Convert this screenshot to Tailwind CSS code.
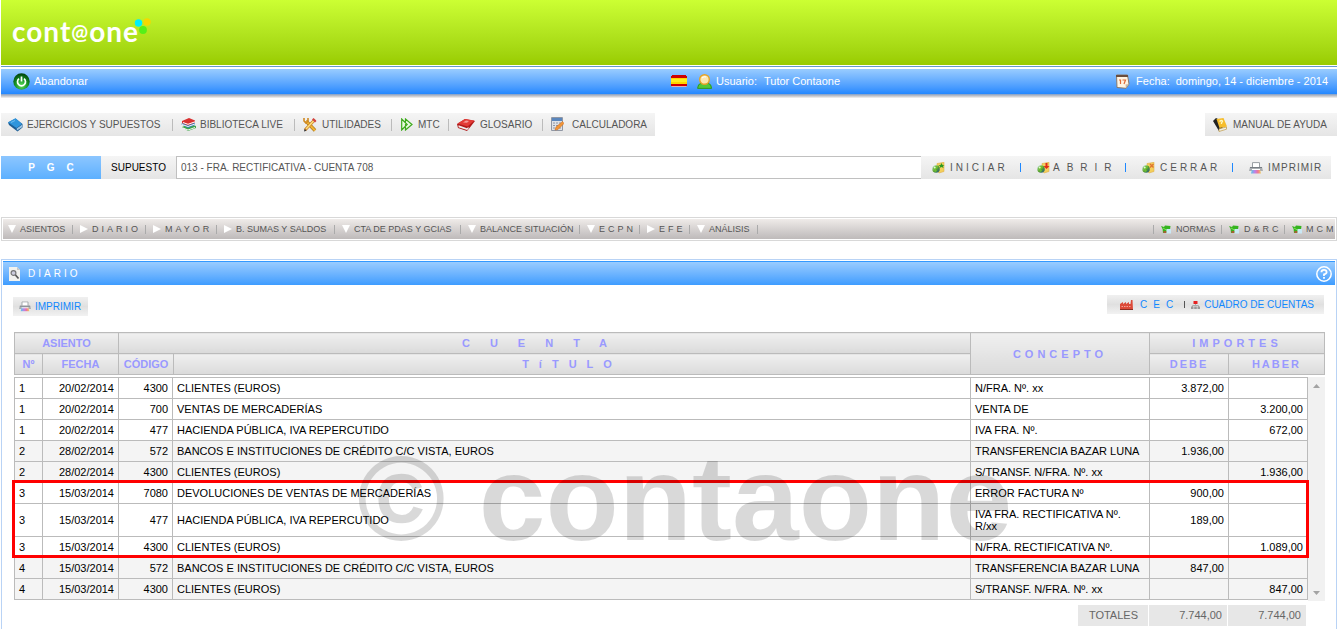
<!DOCTYPE html>
<html lang="es">
<head>
<meta charset="utf-8">
<meta name="viewport" content="width=device-width, initial-scale=1">
<title>Contaone - Diario</title>
<script src="https://cdn.jsdelivr.net/npm/@tailwindcss/browser@4"></script>
</head>
<body class="flex min-h-screen flex-col overflow-x-hidden bg-white pl-px font-['Liberation_Sans',Arial,sans-serif] text-[11px] leading-3 text-black">

<svg class="absolute size-0" aria-hidden="true">
  <defs>
    <linearGradient id="g-globe" x1="0" y1="0" x2="1" y2="1"><stop offset="0" stop-color="#d8f0ff"/><stop offset=".5" stop-color="#5aa02c"/><stop offset="1" stop-color="#1c4f8c"/></linearGradient>
    <linearGradient id="g-print" x1="0" x2="1"><stop offset="0" stop-color="#58c8e8"/><stop offset=".4" stop-color="#c080e8"/><stop offset=".7" stop-color="#f07890"/><stop offset="1" stop-color="#f0d060"/></linearGradient>
    <radialGradient id="g-power" cx=".5" cy=".75" r=".7"><stop offset="0" stop-color="#5be05b"/><stop offset=".6" stop-color="#128a22"/><stop offset="1" stop-color="#04490d"/></radialGradient>
  </defs>
  <symbol id="folder-globe" viewBox="0 0 13 12">
    <path d="M5 1.5 8 1l4-.8v9.3L7 11 5 9z" fill="#f4cf5c" stroke="#d9a53a" stroke-width=".5"/>
    <circle cx="4" cy="7" r="3.8" fill="url(#g-globe)"/>
    <path d="M1 6q2-3 4-2l1 2-2 1 1 2-2 1z" fill="#6cc02e"/>
    <circle cx="2.7" cy="5.4" r="1" fill="#fff" opacity=".8"/>
  </symbol>
  <symbol id="printer" viewBox="0 0 14 12">
    <path d="M3.5 5V.6h7V5" fill="#fff" stroke="#999ea3"/>
    <path d="M1 5h12l1 4H0z" fill="#a9adb1"/><path d="M1 5h12v1H1z" fill="#777d83"/>
    <path d="M3 7.5h8L12 11.5H2z" fill="url(#g-print)"/><path d="M3 7.5h8" stroke="#fff"/>
  </symbol>
  <symbol id="note" viewBox="0 0 10 9">
    <path d="M0 1 3 2 4 .6 9.500 1 8.600 7.500 2 8 1.600 4z" fill="#35b41f"/>
    <path d="M2 3l5 3" stroke="#7ae055"/><path d="M2.500 6h3v2h-3z" fill="#a5602f"/>
    <rect x="5.500" y="4" width="4.500" height="4.500" fill="#c9e8f5"/>
  </symbol>
  <symbol id="down" viewBox="0 0 8 8"><path d="M0 0h8L4 8z" fill="#fff"/></symbol>
  <symbol id="right" viewBox="0 0 8 8"><path d="M0 0 8 4 0 8z" fill="#fff"/></symbol>
</svg>

<header>
  <div class="flex h-[65px] items-start bg-linear-to-b from-[#ccff33] to-[#99cc00]">
    <a href="#" aria-label="cont@one" class="relative mt-[15px] ml-[11px] flex items-start font-[Lato,sans-serif] text-[28px] leading-8 font-bold tracking-[1px] text-white">cont<span class="text-[20px]">@</span>one
      <svg class="absolute -right-3 top-[3px] h-4 w-[17px]" viewBox="0 0 17 16" aria-hidden="true"><circle cx="4.500" cy="5" r="3.700" fill="#00f0f8"/><circle cx="13" cy="4" r="3.700" fill="#f5d800"/><circle cx="9" cy="12" r="3.900" fill="#55f018"/></svg>
    </a>
  </div>
  <div class="mt-px h-px bg-[#6699cc]"></div>
  <div class="mt-0.5 flex h-[25px] items-center bg-linear-to-b from-[#99ccff] to-[#2288ff] pb-px text-white">
    <div class="flex w-1/2 items-center pl-3">
      <a href="#" class="flex items-center gap-1">
        <svg class="size-[17px]" viewBox="0 0 17 17" aria-hidden="true"><circle cx="8.500" cy="8.500" r="8.200" fill="url(#g-power)"/><path d="M6 5.700a4 4 0 1 0 5 0M8.500 3.500v5" fill="none" stroke="#fff" stroke-width="1.700"/></svg>
        Abandonar</a>
    </div>
    <div class="flex flex-1 items-center justify-between pr-[9px] pl-[2px]">
      <div class="flex items-center">
        <button type="button" aria-label="Español" class="mr-[10px]"><svg class="h-3 w-4" viewBox="0 0 16 12" aria-hidden="true"><path d="M1 0h14v12H1z" fill="#cf0000"/><path d="M0 1h16v10H0z" fill="#cf0000"/><path d="M0 3h16v6H0z" fill="#ffd500"/><path d="M0 4h16v3H0z" fill="#ffed21"/><path d="M.5 11.500h15" stroke="#e8b0b0"/></svg></button>
        <svg class="mr-1 h-[15px] w-[15px]" viewBox="0 0 15 15" aria-hidden="true"><path d="M.6 14.400q0-4.500 4-5.400h6q4 1 4 5.400z" fill="#54c738" stroke="#2d9a22"/><circle cx="7.500" cy="5.500" r="4.800" fill="#fbe6b0" stroke="#e6a324" stroke-width="1.400"/><path d="M5 4q2-2 4-1" stroke="#fff" fill="none"/></svg>
        <span class="mr-[7px]">Usuario:</span><span>Tutor Contaone</span>
      </div>
      <div class="flex items-center">
        <svg class="mr-1.5 h-[15px] w-[15px]" viewBox="0 0 15 15" aria-hidden="true"><path d="M1.500 1h11l1.500 9-3 4.300-9-.8z" fill="#fff4e2" stroke="#8b7868"/><path d="M1 1h12v2H1z" fill="#6a4d3d"/><path d="M4 6h1.500v4M7.500 6h3L9 10" fill="none" stroke="#e06a36" stroke-width="1.200"/><path d="m14 10-3.500.4.500 3.900z" fill="#c4b7a6"/></svg>
        <span class="mr-1.5">Fecha:</span><span>domingo, 14 - diciembre - 2014</span>
      </div>
    </div>
  </div>
  <div class="h-1 bg-linear-to-b from-[#7d9cc8] via-[#c4c4c8] to-[#f4f4f4]"></div>
</header>

<nav aria-label="Principal" class="mt-[15px] flex justify-between text-[10px] text-[#555]">
  <ul class="flex h-[23px] bg-linear-to-b from-[#f5f5f5] to-[#e5e5e5] whitespace-nowrap">
    <li class="flex w-[172px] items-center justify-between pl-[7px]"><a href="#" class="flex items-center gap-1"><svg class="h-[14px] w-[15px]" viewBox="0 0 15 14" aria-hidden="true"><path d="M0 4.500 7.500.5 14.500 6v3.500L9.500 13.500 1 7z" fill="#1c5d94"/><path d="M0 4.200 7.500.3 14 6 8.500 10z" fill="#2f95dc"/><path d="M8.700 10.500 14 6.800v2.400L9 12.600z" fill="#9cc4e4"/><path d="m3 4.500 4-2" stroke="#6fbdf0"/></svg>EJERCICIOS Y SUPUESTOS</a><span class="h-3 w-px bg-[#bbb]"></span></li>
    <li class="flex w-[122px] items-center justify-between pl-2"><a href="#" class="flex items-center gap-1"><svg class="h-[14px] w-[15px]" viewBox="0 0 15 14" aria-hidden="true"><path d="m1 9 6 4 8-3v-2L8 6z" fill="#3fa548"/><path d="m2 10 5 2 7-2.500" stroke="#f4f4f4" fill="none"/><path d="m0 6 7 4 7-3V5L7 3z" fill="#2f7cc0"/><path d="m1 6.500 6 2 7-2.500" stroke="#f4f4f4" fill="none"/><path d="M1 3 8 0l6 2.500v2L7 7.500 1 5z" fill="#d93030"/><path d="m2 4.500 5 1.800 7-2.500" stroke="#fff" fill="none"/></svg>BIBLIOTECA LIVE</a><span class="h-3 w-px bg-[#bbb]"></span></li>
    <li class="flex w-[97px] items-center justify-between pl-2"><a href="#" class="flex items-center gap-[5px]"><svg class="size-[14px]" viewBox="0 0 14 14" aria-hidden="true"><path d="M3 3 12 12.500" stroke="#a97720" stroke-width="3.400"/><path d="M3 3 12 12.500" stroke="#f3b532" stroke-width="2"/><path d="M1 0v3l2 2 2-2V0" fill="none" stroke="#d08a24" stroke-width="1.600"/><path d="M12 1.500 2 12" stroke="#c77c26" stroke-width="3"/><path d="M11 2.500 3 11" stroke="#ffe07a" stroke-width="1.600"/><path d="m10.500 0 3 3-1.500 1.500-3-3z" fill="#d44343"/><path d="M1 13.500 1.500 11l2 1.800z" fill="#333"/></svg>UTILIDADES</a><span class="h-3 w-px bg-[#bbb]"></span></li>
    <li class="flex w-[57px] items-center justify-between pl-[9px]"><a href="#" class="flex items-center gap-[5px]"><svg class="h-[13px] w-3" viewBox="0 0 12 13" aria-hidden="true"><path d="M.7 1v11l5.500-5.500zM4.500 1v11l6.500-5.500z" fill="#e9fbe0" stroke="#3eaa1c" stroke-width="1.200"/></svg>MTC</a><span class="h-3 w-px bg-[#bbb]"></span></li>
    <li class="flex w-[94px] items-center justify-between pl-2"><a href="#" class="flex items-center gap-[5px]"><svg class="h-3 w-[18px]" viewBox="0 0 18 12" aria-hidden="true"><path d="M0 5 8 0l10 2-5.500 7L10 12 1 9z" fill="#b01919"/><path d="M.5 4.500 8 0l9.500 1.500-7 6z" fill="#e33a36"/><path d="M1.500 6.300 10 9.200l1.500-1.500v2L10 11 1.500 8.300z" fill="#eee"/><path d="M6 3.500 9 1.500l3 .6-2 1.600z" fill="#f59a96"/></svg>GLOSARIO</a><span class="h-3 w-px bg-[#bbb]"></span></li>
    <li class="flex items-center pr-2 pl-2"><a href="#" class="flex items-center gap-2"><svg class="h-[15px] w-[13px]" viewBox="0 0 13 15" aria-hidden="true"><path d="M.5.5h11v13H.5z" fill="#dfe2e7" stroke="#9097a4"/><path d="M1 1h10v3H1z" fill="#5a86bd"/><path d="M2 6h8M2 8.500h8M2 11h8" stroke="#8e96a5" stroke-dasharray="2 1"/><path d="m4 13 1-3 6.500-5.500 1.500 2L7 12.500z" fill="#f29436" stroke="#c2651b" stroke-width=".5"/></svg>CALCULADORA</a></li>
  </ul>
  <a href="#" class="flex h-[23px] w-[132px] items-center gap-[5px] bg-linear-to-b from-[#f5f5f5] to-[#e5e5e5] pl-2 whitespace-nowrap"><svg class="h-[14px] w-[15px]" viewBox="0 0 15 14" aria-hidden="true"><path d="M0 3 3 0l4 2 3 9-4 2z" fill="#222"/><path d="m3.500 1 7-1L14 8.500 6.500 10z" fill="#f6bd2c"/><path d="M6 10.800 13.500 9v2.200L6 13.500z" fill="#f0f0e8" stroke="#b98c28" stroke-width=".6"/><path d="M6.500 3.500q2.500-2 3 0L8.500 5v1" fill="none" stroke="#fff8c0" stroke-width="1.300"/></svg>MANUAL DE AYUDA</a>
</nav>

<section class="mt-5 mr-[6px] flex h-[23px] text-[10px] whitespace-nowrap">
  <button type="button" class="w-[100px] bg-linear-to-b from-[#8cc6ff] to-[#5cb0ff] pl-3 font-bold tracking-[12px] text-white">PGC</button>
  <label for="supuesto" class="flex w-[75px] items-center justify-center bg-linear-to-b from-[#f5f5f5] to-[#e5e5e5]">SUPUESTO</label>
  <input id="supuesto" type="text" value="013 - FRA. RECTIFICATIVA - CUENTA 708" class="min-w-0 flex-1 border border-r-0 border-[#c0c0c0] pl-1 text-[#555]">
  <div class="flex items-center bg-linear-to-b from-[#f5f5f5] to-[#e5e5e5] text-[#555]">
    <button type="button" class="flex w-[99px] items-center gap-[5px] pl-[11px] tracking-[3px]"><svg class="h-3 w-[13px]" viewBox="0 0 13 12" aria-hidden="true"><use href="#folder-globe" width="13" height="12"/><path d="m9.500 1 1 2h2l-1.500 1 .5 2-2-1-2 1 .5-2L6 3h2.500z" fill="#2e9a22"/></svg>INICIAR</button>
    <span class="h-[9px] w-px bg-[#1e88ff]"></span>
    <button type="button" class="flex w-[104px] items-center gap-[3px] pl-4 tracking-[7px]"><svg class="h-3 w-[13px] shrink-0" viewBox="0 0 13 12" aria-hidden="true"><use href="#folder-globe" width="13" height="12"/><path d="M8.500 1h2v3h2l-3 3-3-3h2z" fill="#e02a18"/></svg>ABRIR</button>
    <span class="h-[9px] w-px bg-[#1e88ff]"></span>
    <button type="button" class="flex w-[106px] items-center gap-[5px] pl-4 tracking-[3px]"><svg class="h-3 w-[13px]" viewBox="0 0 13 12" aria-hidden="true"><use href="#folder-globe" width="13" height="12"/><path d="m8 2 3.500 3.500M11.500 2 8 5.500" stroke="#df7430" stroke-width="1.400"/></svg>CERRAR</button>
    <span class="h-[9px] w-px bg-[#1e88ff]"></span>
    <button type="button" class="flex w-[98px] items-center gap-[5px] pl-4 tracking-[1px]"><svg class="h-3 w-[14px]" viewBox="0 0 14 12" aria-hidden="true"><use href="#printer" width="14" height="12"/></svg>IMPRIMIR</button>
  </div>
</section>

<nav aria-label="Informes" class="mt-[38px] border border-[#d8d8d8] p-px">
  <div class="flex h-5 items-center justify-between bg-linear-to-b from-[#efebe9] to-[#bebaba] text-[9px] whitespace-nowrap text-[#555]">
    <ul class="flex items-center">
      <li class="flex w-[70px] items-center justify-between pl-[5px]"><a href="#" class="flex items-center gap-1"><svg class="size-2" aria-hidden="true"><use href="#down"/></svg>ASIENTOS</a><span class="h-[9px] w-px bg-[#aaa]"></span></li>
      <li class="flex w-[73px] items-center justify-between pl-[7px]"><a href="#" class="flex items-center gap-1 tracking-[3px]"><svg class="size-2" aria-hidden="true"><use href="#right"/></svg>DIARIO</a><span class="h-[9px] w-px bg-[#aaa]"></span></li>
      <li class="flex w-[71px] items-center justify-between pl-[7px]"><a href="#" class="flex items-center gap-1 tracking-[3px]"><svg class="size-2" aria-hidden="true"><use href="#right"/></svg>MAYOR</a><span class="h-[9px] w-px bg-[#aaa]"></span></li>
      <li class="flex w-[118px] items-center justify-between pl-[7px]"><a href="#" class="flex items-center gap-1"><svg class="size-2" aria-hidden="true"><use href="#right"/></svg>B. SUMAS Y SALDOS</a><span class="h-[9px] w-px bg-[#aaa]"></span></li>
      <li class="flex w-[126px] items-center justify-between pl-[7px]"><a href="#" class="flex items-center gap-1"><svg class="size-2" aria-hidden="true"><use href="#down"/></svg>CTA DE PDAS Y GCIAS</a><span class="h-[9px] w-px bg-[#aaa]"></span></li>
      <li class="flex w-[119px] items-center justify-between pl-[7px]"><a href="#" class="flex items-center gap-1"><svg class="size-2" aria-hidden="true"><use href="#down"/></svg>BALANCE SITUACIÓN</a><span class="h-[9px] w-px bg-[#aaa]"></span></li>
      <li class="flex w-[60px] items-center justify-between pl-[7px]"><a href="#" class="flex items-center gap-1 tracking-[3px]"><svg class="size-2" aria-hidden="true"><use href="#down"/></svg>ECPN</a><span class="h-[9px] w-px bg-[#aaa]"></span></li>
      <li class="flex w-[50px] items-center justify-between pl-[7px]"><a href="#" class="flex items-center gap-1 tracking-[3px]"><svg class="size-2" aria-hidden="true"><use href="#right"/></svg>EFE</a><span class="h-[9px] w-px bg-[#aaa]"></span></li>
      <li class="flex w-[68px] items-center justify-between pl-[7px]"><a href="#" class="flex items-center gap-1"><svg class="size-2" aria-hidden="true"><use href="#down"/></svg>ANÁLISIS</a><span class="h-[9px] w-px bg-[#aaa]"></span></li>
    </ul>
    <ul class="flex items-center">
      <li class="flex w-[68px] items-center gap-[7px]"><span class="h-[9px] w-px shrink-0 bg-[#aaa]"></span><a href="#" class="flex items-center gap-[5px]"><svg class="h-[9px] w-[10px] shrink-0" viewBox="0 0 10 9" aria-hidden="true"><use href="#note" width="10" height="9"/></svg>NORMAS</a></li>
      <li class="flex w-[63px] items-center gap-[7px]"><span class="h-[9px] w-px shrink-0 bg-[#aaa]"></span><a href="#" class="flex items-center gap-[5px] tracking-[3px]"><svg class="h-[9px] w-[10px] shrink-0" viewBox="0 0 10 9" aria-hidden="true"><use href="#note" width="10" height="9"/></svg>D&amp;RC</a></li>
      <li class="flex w-[51px] items-center gap-[7px]"><span class="h-[9px] w-px shrink-0 bg-[#aaa]"></span><a href="#" class="flex items-center gap-1 tracking-[3px]"><svg class="h-[9px] w-[10px] shrink-0" viewBox="0 0 10 9" aria-hidden="true"><use href="#note" width="10" height="9"/></svg>MCM</a></li>
    </ul>
  </div>
</nav>

<main class="mt-[18px] flex-1 border border-b-0 border-[#b9d3f5] px-px pt-px">
  <div class="flex h-6 items-center justify-between border-t border-[#3399ff] bg-linear-to-b from-[#99ccff] to-[#3d9cff] pr-[3px] pl-1.5 text-white">
    <h1 class="flex items-center gap-2 text-[10px] tracking-[3px]"><svg class="h-[14px] w-[11px]" viewBox="0 0 11 14" aria-hidden="true"><path d="M0 0h8l3 3v11H0z" fill="#f2f2ee"/><path d="M8 0v3h3z" fill="#c8c8c8"/><circle cx="4.500" cy="6" r="2.400" fill="#ccd" stroke="#777" stroke-width="1.200"/><path d="m6.500 8 3 3.500" stroke="#555" stroke-width="1.700"/></svg>DIARIO</h1>
    <button type="button" aria-label="Ayuda"><svg class="block size-4" viewBox="0 0 16 16" aria-hidden="true"><circle cx="8" cy="8" r="7.200" fill="none" stroke="#fff" stroke-width="1.500"/><path d="M5.400 6.300Q5.500 3.900 8 3.900t2.600 2.300Q10.600 7.600 8 8.400V10" fill="none" stroke="#fff" stroke-width="1.800"/><path d="M7.100 11h1.800v1.800H7.100z" fill="#fff"/></svg></button>
  </div>

  <div class="mt-[10px] flex items-start justify-between pr-[11px] pl-[10px] text-[10px] text-[#1188ff]">
    <button type="button" class="mt-0.5 flex h-[19px] items-center gap-1 bg-linear-to-b from-[#f0f0f0] via-[#e0e0e0] to-[#f2f2f2] pr-[7px] pl-1.5"><svg class="h-[11px] w-3" viewBox="0 0 14 12" aria-hidden="true"><use href="#printer" width="14" height="12"/></svg>IMPRIMIR</button>
    <div class="flex h-[19px] items-center bg-linear-to-b from-[#f0f0f0] via-[#e0e0e0] to-[#f2f2f2] pr-[10px] pl-[13px]">
      <button type="button" class="flex items-center gap-[7px] tracking-[6px]"><svg class="h-[10px] w-[13px]" viewBox="0 0 13 10" aria-hidden="true"><path d="M0 10V4l3-2v2l3-2v2l3-2v2h1.500L11 0h1.500L13 10z" fill="#dc4a38"/><path d="M1.500 6.500h10" stroke="#f5a398" stroke-dasharray="1.500 1"/><path d="M0 9.500h13" stroke="#8d2d22"/></svg>CEC</button>
      <span class="ml-[5px] h-[7px] w-px bg-[#555]"></span>
      <button type="button" class="ml-[6px] flex items-center gap-1"><svg class="h-2 w-[9px]" viewBox="0 0 9 8" aria-hidden="true"><path d="M2.500 0h4v3h-4z" fill="#e62222"/><path d="M4.500 3v2M1.500 6V4.500h6V6" stroke="#aaa" fill="none"/><path d="M0 5.500h2.500V8H0zM3.200 5.500h2.600V8H3.200zM6.500 5.500H9V8H6.500z" fill="#999"/></svg>CUADRO DE CUENTAS</button>
    </div>
  </div>

  <div class="mt-4 pr-[10px] pl-[11px]">
    <table class="w-full table-fixed border-collapse font-bold text-[#9999ff] [&_th]:h-[21px] [&_th]:border [&_th]:border-[#bbb] [&_th]:bg-linear-to-b [&_th]:from-[#f0f0f0] [&_th]:to-[#dadada] [&_th]:p-0">
      <colgroup><col class="w-[28px]"><col class="w-[76px]"><col class="w-[55px]"><col><col class="w-[179px]"><col class="w-[79px]"><col class="w-[96px]"></colgroup>
      <thead>
        <tr><th colspan="2">ASIENTO</th><th colspan="2" class="tracking-[20px]">CUENTA</th><th rowspan="2" class="tracking-[4px]">CONCEPTO</th><th colspan="2" class="tracking-[4px]">IMPORTES</th></tr>
        <tr><th>Nº</th><th>FECHA</th><th>CÓDIGO</th><th class="tracking-[10px]">TíTULO</th><th class="tracking-[2px]">DEBE</th><th class="tracking-[2px]">HABER</th></tr>
      </thead>
    </table>

    <div class="relative mt-0.5 flex">
      <table class="w-full table-fixed border-collapse [&_td]:border [&_td]:border-[#bbb] [&_td]:px-1 [&_td]:py-1 [&_td:nth-child(2)]:text-right [&_td:nth-child(3)]:text-right [&_td:nth-child(6)]:text-right [&_td:nth-child(7)]:text-right">
        <colgroup><col class="w-[28px]"><col class="w-[76px]"><col class="w-[54px]"><col><col class="w-[179px]"><col class="w-[79px]"><col class="w-[79px]"></colgroup>
        <tbody>
          <tr><td>1</td><td>20/02/2014</td><td>4300</td><td>CLIENTES (EUROS)</td><td>N/FRA. Nº. xx</td><td>3.872,00</td><td></td></tr>
          <tr><td>1</td><td>20/02/2014</td><td>700</td><td>VENTAS DE MERCADERÍAS</td><td>VENTA DE</td><td></td><td>3.200,00</td></tr>
          <tr><td>1</td><td>20/02/2014</td><td>477</td><td>HACIENDA PÚBLICA, IVA REPERCUTIDO</td><td>IVA FRA. Nº.</td><td></td><td>672,00</td></tr>
          <tr class="bg-[#f4f4f4]"><td>2</td><td>28/02/2014</td><td>572</td><td>BANCOS E INSTITUCIONES DE CRÉDITO C/C VISTA, EUROS</td><td>TRANSFERENCIA BAZAR LUNA</td><td>1.936,00</td><td></td></tr>
          <tr class="bg-[#f4f4f4]"><td>2</td><td>28/02/2014</td><td>4300</td><td>CLIENTES (EUROS)</td><td>S/TRANSF. N/FRA. Nº. xx</td><td></td><td>1.936,00</td></tr>
          <tr><td>3</td><td>15/03/2014</td><td>7080</td><td>DEVOLUCIONES DE VENTAS DE MERCADERÍAS</td><td>ERROR FACTURA Nº</td><td>900,00</td><td></td></tr>
          <tr><td>3</td><td>15/03/2014</td><td>477</td><td>HACIENDA PÚBLICA, IVA REPERCUTIDO</td><td>IVA FRA. RECTIFICATIVA Nº.<br>R/xx</td><td>189,00</td><td></td></tr>
          <tr><td>3</td><td>15/03/2014</td><td>4300</td><td>CLIENTES (EUROS)</td><td>N/FRA. RECTIFICATIVA Nº.</td><td></td><td>1.089,00</td></tr>
          <tr class="bg-[#f4f4f4]"><td>4</td><td>15/03/2014</td><td>572</td><td>BANCOS E INSTITUCIONES DE CRÉDITO C/C VISTA, EUROS</td><td>TRANSFERENCIA BAZAR LUNA</td><td>847,00</td><td></td></tr>
          <tr class="bg-[#f4f4f4]"><td>4</td><td>15/03/2014</td><td>4300</td><td>CLIENTES (EUROS)</td><td>S/TRANSF. N/FRA. Nº. xx</td><td></td><td>847,00</td></tr>
        </tbody>
      </table>
      <div class="-mb-px flex w-[17px] shrink-0 flex-col justify-between bg-[#f1f1f1]">
        <button type="button" aria-label="Subir" class="flex h-[17px] items-center justify-center"><svg class="h-1 w-[7px]" viewBox="0 0 7 4" aria-hidden="true"><path d="M0 4 3.500 0 7 4z" fill="#a3a3a3"/></svg></button>
        <button type="button" aria-label="Bajar" class="flex h-[17px] items-center justify-center"><svg class="h-1 w-[7px]" viewBox="0 0 7 4" aria-hidden="true"><path d="M0 0h7L3.500 4z" fill="#a3a3a3"/></svg></button>
      </div>
      <!-- Recuadro del asiento 3 y marca de agua, sobre la tabla -->
      <div class="pointer-events-none absolute top-[103px] right-4 -left-0.5 h-[78px] border-3 border-[#ff0000]"></div>
      <div class="pointer-events-none absolute top-[61px] left-[343px] text-[120px] leading-[120px] font-bold whitespace-nowrap text-black/15">© contaone</div>
    </div>

    <dl class="mt-[5px] mr-[19px] flex h-[21px] justify-end gap-px text-[#666] [&>*]:flex [&>*]:items-center [&>*]:justify-end [&>*]:bg-[#e7e7e7] [&>*]:pb-px">
      <dt class="w-[70px] pr-[10px]">TOTALES</dt><dd class="w-[78px] pr-[5px]">7.744,00</dd><dd class="w-[78px] pr-[5px]">7.744,00</dd>
    </dl>
  </div>
</main>
</body>
</html>
